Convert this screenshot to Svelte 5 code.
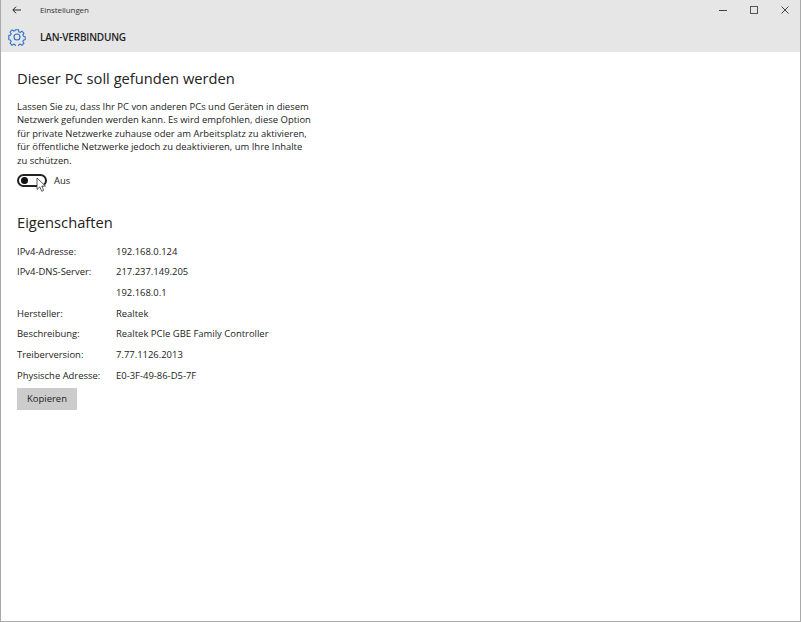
<script>
  const props = [
    ['IPv4-Adresse:', '192.168.0.124'],
    ['IPv4-DNS-Server:', '217.237.149.205'],
    ['', '192.168.0.1'],
    ['Hersteller:', 'Realtek'],
    ['Beschreibung:', 'Realtek PCIe GBE Family Controller'],
    ['Treiberversion:', '7.77.1126.2013'],
    ['Physische Adresse:', 'E0-3F-49-86-D5-7F']
  ];
</script>

<div class="window">
  <header>
    <div class="titlebar">
      <svg class="back" width="9" height="8" viewBox="0 0 9 8">
        <path d="M9 4H1M4 .7 .8 4 4 7.3" fill="none" stroke="#222" stroke-width="1"/>
      </svg>
      <span class="app-name">Einstellungen</span>
      <div class="controls">
        <svg width="8" height="8" viewBox="0 0 8 8"><path d="M0 4.5h8" stroke="#444" stroke-width="1"/></svg>
        <svg width="8" height="8" viewBox="0 0 8 8"><rect x=".5" y=".5" width="7" height="7" fill="none" stroke="#555"/></svg>
        <svg width="8" height="8" viewBox="0 0 8 8"><path d="M.5 .5l7 7M7.5 .5l-7 7" stroke="#444" stroke-width="1"/></svg>
      </div>
    </div>
    <div class="pagebar">
      <svg class="gear" width="18" height="18" viewBox="0 0 18 18">
        <circle cx="9" cy="9" r="3" fill="none" stroke="#2b6fc8" stroke-width="1.1"/>
        <path d="M7.4 1h3.2l.5 2.3 1.4.6 2-1.3 2.2 2.3-1.2 2 .6 1.4 2 .5v3.2l-2 .5-.6 1.4 1.2 2-2.2 2.3-2-1.3-1.4.6-.5 2.3H7.4l-.5-2.3-1.4-.6-2 1.3-2.2-2.3 1.2-2-.6-1.4-2-.5V7.3l2-.5.6-1.4-1.2-2 2.2-2.3 2 1.3 1.4-.6z" transform="translate(.9 .9) scale(.9)" fill="none" stroke="#2b6fc8" stroke-width="1.2"/>
      </svg>
      <span class="page-title">LAN-VERBINDUNG</span>
    </div>
  </header>

  <main>
    <h2>Dieser PC soll gefunden werden</h2>
    <p>Lassen Sie zu, dass Ihr PC von anderen PCs und Geräten in diesem Netzwerk gefunden werden kann. Es wird empfohlen, diese Option für private Netzwerke zuhause oder am Arbeitsplatz zu aktivieren, für öffentliche Netzwerke jedoch zu deaktivieren, um Ihre Inhalte zu schützen.</p>
    <div class="toggle-row">
      <span class="toggle"><span class="knob"></span></span>
      <span>Aus</span>
      <svg class="cursor" width="11" height="16" viewBox="0 0 11 16">
        <path d="M1 1v11.5l2.8-2.6 1.9 4.4 2-.9-1.9-4.3h3.7z" fill="#fff" stroke="#333" stroke-width=".8"/>
      </svg>
    </div>

    <h2 class="second">Eigenschaften</h2>
    <div class="props">
      {#each props as [label, value]}
        <div class="row">
          <span class="label">{label}</span>
          <span>{value}</span>
        </div>
      {/each}
    </div>
    <button>Kopieren</button>
  </main>
</div>

<style>
  :global(body) {
    background: #fff;
  }

  .window {
    box-sizing: border-box;
    width: 801px;
    height: 622px;
    border: solid #a9a9a9;
    border-width: 0 1px 1px 1px;
    font-family: "Open Sans", sans-serif;
    font-size: 9.45px;
    color: #222;
    overflow: hidden;
  }

  header {
    height: 52px;
    background: #e6e6e6;
  }

  .titlebar {
    display: flex;
    align-items: center;
    height: 20px;
    padding-left: 11px;
  }

  .app-name {
    margin-left: 19px;
    margin-bottom: 1px;
    font-size: 8px;
    letter-spacing: -0.1px;
    color: #333;
  }

  .controls {
    margin-left: auto;
    display: flex;
    gap: 23px;
    padding-right: 11px;
  }

  .pagebar {
    display: flex;
    align-items: center;
    height: 32px;
    padding: 2px 0 0 7px;
    box-sizing: border-box;
  }

  .page-title {
    margin-left: 14px;
    font-size: 10px;
    font-weight: 600;
    letter-spacing: -0.2px;
  }

  main {
    padding: 15px 0 0 16px;
  }

  h2 {
    margin: 0;
    font-size: 14.7px;
    font-weight: 400;
    line-height: 22px;
  }

  h2.second {
    margin-top: 24px;
  }

  p {
    width: 296px;
    margin: 11px 0 0;
    line-height: 13.4px;
  }

  .toggle-row {
    position: relative;
    display: flex;
    align-items: center;
    gap: 7px;
    height: 14px;
    margin-top: 6px;
  }

  .toggle {
    box-sizing: border-box;
    display: flex;
    align-items: center;
    width: 30px;
    height: 13px;
    padding-left: 2px;
    border: 2px solid #222;
    border-radius: 7px;
  }

  .knob {
    width: 7px;
    height: 7px;
    border-radius: 50%;
    background: #111;
  }

  .cursor {
    position: absolute;
    left: 19px;
    top: 4px;
  }

  .props {
    margin-top: 8px;
  }

  .row {
    display: flex;
    height: 20.65px;
    align-items: center;
  }

  .label {
    width: 99px;
  }

  button {
    display: block;
    width: 60px;
    height: 22px;
    margin-top: 2px;
    padding: 0;
    border: 0;
    background: #ccc;
    color: #222;
    font: inherit;
  }
</style>
